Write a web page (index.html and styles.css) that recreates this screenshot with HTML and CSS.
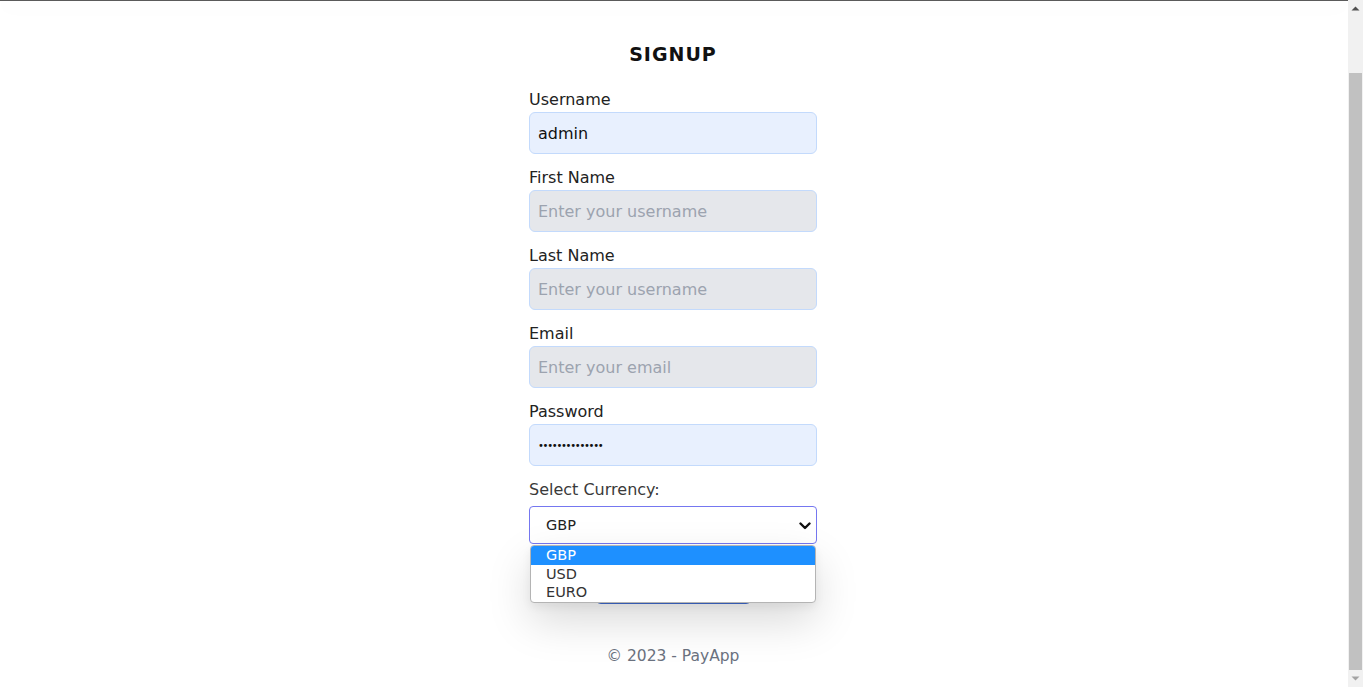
FILE: index.html
```html
<!DOCTYPE html>
<html lang="en">
<head>
<meta charset="utf-8">
<title>Signup - PayApp</title>
<link rel="stylesheet" href="styles.css">
</head>
<body>
<div class="viewport">
  <div class="content">
    <div class="nav-edge"></div>
    <main class="page">
      <h1 class="title">SIGNUP</h1>
      <form class="form">
        <div class="field">
          <label class="label">Username</label>
          <input class="input input-filled" type="text" value="admin">
        </div>
        <div class="field">
          <label class="label">First Name</label>
          <input class="input" type="text" placeholder="Enter your username">
        </div>
        <div class="field">
          <label class="label">Last Name</label>
          <input class="input" type="text" placeholder="Enter your username">
        </div>
        <div class="field">
          <label class="label">Email</label>
          <input class="input" type="email" placeholder="Enter your email">
        </div>
        <div class="field">
          <label class="label">Password</label>
          <input class="input input-filled input-pass" type="password" value="password123456">
        </div>
        <div class="field field-select">
          <label class="label label-select">Select Currency:</label>
          <div class="select-wrap">
            <div class="select">
              <span>GBP</span>
              <svg class="chev" width="12" height="8" viewBox="0 0 12 8"><path d="M1.5 1.5 6 6l4.5-4.5" fill="none" stroke="#111" stroke-width="2.4" stroke-linecap="round" stroke-linejoin="round"/></svg>
            </div>
            <ul class="menu">
              <li class="opt opt-active">GBP</li>
              <li class="opt">USD</li>
              <li class="opt opt-last">EURO</li>
            </ul>
          </div>
        </div>
        <button class="btn" type="button">Signup</button>
      </form>
      <footer class="footer">© 2023 - PayApp</footer>
    </main>
  </div>
  <div class="scrollbar">
    <div class="sb-btn"><svg width="15" height="17" viewBox="0 0 15 17"><path d="M3.5 10.5 7.5 6.5l4 4z" fill="#505050"/></svg></div>
    <div class="sb-track"><div class="sb-thumb"></div></div>
    <div class="sb-btn"><svg width="15" height="17" viewBox="0 0 15 17"><path d="M3.5 6.5h8l-4 4z" fill="#a3a3a3"/></svg></div>
  </div>
</div>
</body>
</html>
```
FILE: styles.css
```css
* { box-sizing: border-box; }
html, body { margin: 0; padding: 0; }
body {
  font-family: "DejaVu Sans", "Noto Sans", sans-serif;
  background: #fff;
  color: #1f1f1f;
  overflow: hidden;
}
.viewport {
  display: flex;
  height: 687px;
}
.content {
  flex: 1;
  display: flex;
  flex-direction: column;
  min-width: 0;
}
.nav-edge {
  height: 1px;
  background: #5a5a5a;
  box-shadow: 0 4px 20px rgba(0,0,0,0.16);
  position: relative;
  z-index: 2;
}
.page {
  flex: 1;
  display: flex;
  flex-direction: column;
  align-items: center;
  padding-top: 41px;
  padding-right: 2px;
}
.title {
  margin: 0;
  font-size: 19px;
  line-height: 24px;
  font-weight: 700;
  letter-spacing: 1px;
  color: #111;
}
.form {
  width: 288px;
  margin-top: 22px;
  display: flex;
  flex-direction: column;
}
.field {
  display: flex;
  flex-direction: column;
  margin-bottom: 12px;
}
.label {
  font-size: 16px;
  line-height: 24px;
  color: #222;
}
.input {
  height: 42px;
  border: 1px solid #c3dafc;
  border-radius: 6px;
  background: #e5e7eb;
  padding: 0 8px;
  font-family: inherit;
  font-size: 16px;
  color: #111;
  outline: none;
}
.input::placeholder { color: #9ca3af; }
.input-filled { background: #e8f0fe; }
.input-pass { font-size: 10px; letter-spacing: -1.3px; }
.field-select { margin-bottom: 0; }
.label-select { color: #3a3a3a; margin-bottom: 4px; }
.select-wrap { position: relative; }
.select {
  height: 38px;
  border: 1px solid #7577f0;
  border-radius: 4px;
  background: #fff;
  display: flex;
  align-items: center;
  justify-content: space-between;
  padding: 0 5px 0 16px;
  font-size: 14.5px;
  color: #222;
}
.chev { display: block; margin-top: 1px; }
.menu {
  position: absolute;
  top: calc(100% + 1px);
  left: 1px;
  right: 1px;
  margin: 0;
  padding: 0;
  list-style: none;
  background: #fff;
  border: 1px solid #b4b4b4;
  border-radius: 4px;
  box-shadow: 0 18px 44px rgba(0,0,0,0.15), 0 4px 10px rgba(0,0,0,0.06);
  overflow: hidden;
  z-index: 5;
}
.opt {
  height: 19px;
  line-height: 19px;
  padding-left: 15px;
  font-size: 14.5px;
  color: #333;
}
.opt-last { height: 18px; line-height: 17px; }
.opt-active { background: #1e90ff; color: #fff; }
.btn {
  align-self: center;
  margin-top: 20px;
  width: 157px;
  height: 40px;
  border: none;
  border-radius: 6px;
  background: #3f6bd0;
  color: #fff;
  font-family: inherit;
  font-size: 15px;
}
.footer {
  margin-top: 40px;
  font-size: 15.5px;
  line-height: 24px;
  color: #6b7280;
}
.scrollbar {
  width: 15px;
  flex: none;
  background: #f1f1f1;
  display: flex;
  flex-direction: column;
}
.sb-btn { height: 17px; flex: none; }
.sb-btn svg { display: block; }
.sb-track {
  flex: 1;
  padding: 56px 1px 0 1px;
  display: flex;
  flex-direction: column;
}
.sb-thumb {
  flex: 1;
  background: #c1c1c1;
}
```
